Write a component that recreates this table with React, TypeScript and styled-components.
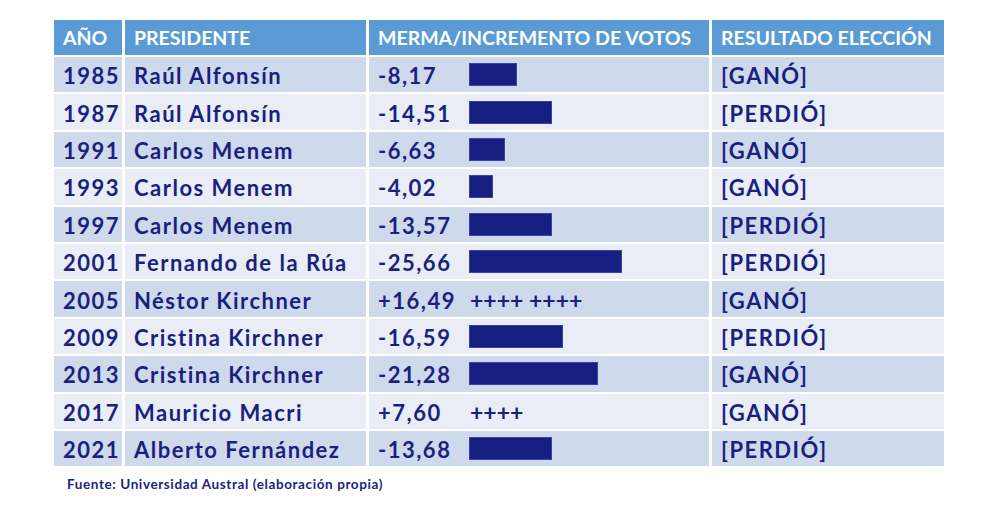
import React from 'react';
import styled, { createGlobalStyle } from 'styled-components';

const GlobalStyle = createGlobalStyle`
  html, body {
    margin: 0;
    padding: 0;
    background: #ffffff;
  }
`;

const Page = styled.div`
  width: 1000px;
  height: 507px;
  padding: 20px 0 0 54px;
  box-sizing: border-box;
  background: #ffffff;
`;

const Table = styled.div`
  display: grid;
  grid-template-columns: 68px 241px 340px 232px;
  grid-template-rows: 35px;
  grid-auto-rows: 35.4px;
  gap: 2px 3px;
  width: 890px;
`;

const HeadCell = styled.div`
  background: #5b9bd5;
  color: #ffffff;
  font-family: Lato, 'Open Sans', sans-serif;
  font-weight: 700;
  font-size: 19.5px;
  display: flex;
  align-items: center;
  padding-left: 9px;
  white-space: nowrap;
`;

const Cell = styled.div<{ $shade: boolean }>`
  background: ${({ $shade }) => ($shade ? '#cfd9ec' : '#e8edf6')};
  color: #1a1f80;
  font-family: Lato, 'Open Sans', sans-serif;
  font-weight: 700;
  font-size: 22px;
  letter-spacing: 1.5px;
  display: flex;
  align-items: center;
  padding: 2px 0 0 9px;
  white-space: nowrap;
`;

const Value = styled.span`
  width: 92px;
`;

const Bar = styled.div`
  height: 21px;
  margin-bottom: 2px;
  background: #171e82;
  box-shadow: 0 0 0 1px #3b43a0;
`;

const Plus = styled.span`
  font-size: 23px;
  letter-spacing: 0;
`;

const Source = styled.div`
  margin: 10px 0 0 13px;
  color: #1a1f80;
  font-family: Lato, 'Open Sans', sans-serif;
  font-weight: 700;
  font-size: 13.5px;
  letter-spacing: 0.6px;
`;

type Row = { year: string; name: string; value: string; bar: number; plus?: string; result: string };

const rows: Row[] = [
  { year: '1985', name: 'Raúl Alfonsín', value: '-8,17', bar: 46, result: '[GANÓ]' },
  { year: '1987', name: 'Raúl Alfonsín', value: '-14,51', bar: 81, result: '[PERDIÓ]' },
  { year: '1991', name: 'Carlos Menem', value: '-6,63', bar: 34, result: '[GANÓ]' },
  { year: '1993', name: 'Carlos Menem', value: '-4,02', bar: 22, result: '[GANÓ]' },
  { year: '1997', name: 'Carlos Menem', value: '-13,57', bar: 81, result: '[PERDIÓ]' },
  { year: '2001', name: 'Fernando de la Rúa', value: '-25,66', bar: 151, result: '[PERDIÓ]' },
  { year: '2005', name: 'Néstor Kirchner', value: '+16,49', bar: 0, plus: '++++ ++++', result: '[GANÓ]' },
  { year: '2009', name: 'Cristina Kirchner', value: '-16,59', bar: 92, result: '[PERDIÓ]' },
  { year: '2013', name: 'Cristina Kirchner', value: '-21,28', bar: 127, result: '[GANÓ]' },
  { year: '2017', name: 'Mauricio Macri', value: '+7,60', bar: 0, plus: '++++', result: '[GANÓ]' },
  { year: '2021', name: 'Alberto Fernández', value: '-13,68', bar: 81, result: '[PERDIÓ]' },
];

export default function App() {
  return (
    <Page>
      <GlobalStyle />
      <Table>
        <HeadCell>AÑO</HeadCell>
        <HeadCell>PRESIDENTE</HeadCell>
        <HeadCell>MERMA/INCREMENTO DE VOTOS</HeadCell>
        <HeadCell>RESULTADO ELECCIÓN</HeadCell>
        {rows.map((r, i) => {
          const shade = i % 2 === 0;
          return (
            <React.Fragment key={r.year}>
              <Cell $shade={shade}>{r.year}</Cell>
              <Cell $shade={shade}>{r.name}</Cell>
              <Cell $shade={shade}>
                <Value>{r.value}</Value>
                {r.plus ? <Plus>{r.plus}</Plus> : <Bar style={{ width: `${r.bar}px` }} />}
              </Cell>
              <Cell $shade={shade}>{r.result}</Cell>
            </React.Fragment>
          );
        })}
      </Table>
      <Source>Fuente: Universidad Austral (elaboración propia)</Source>
    </Page>
  );
}
